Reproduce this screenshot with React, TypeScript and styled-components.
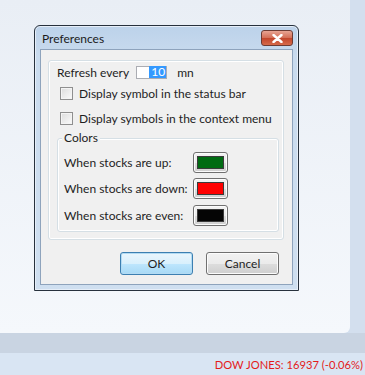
import styled, { createGlobalStyle } from "styled-components";

const GlobalStyle = createGlobalStyle`
  html, body {
    margin: 0;
    padding: 0;
  }
  body {
    font-family: Lato, "Noto Sans", sans-serif;
    font-size: 12px;
    color: #1e1e1e;
  }
`;

const Screen = styled.div`
  width: 365px;
  height: 375px;
  display: flex;
  flex-direction: column;
  overflow: hidden;
`;

const Workspace = styled.div`
  height: 333px;
  display: flex;
  background: #d3dfee;
`;

const Panel = styled.div`
  flex: 1;
  background: linear-gradient(#e9eef5, #f5f8fc);
  border-bottom-right-radius: 6px;
  padding: 25px 0 0 34px;
`;

const RightStrip = styled.div`
  width: 15px;
`;

const Band = styled.div`
  height: 20px;
  background: #c9d4e2;
`;

const StatusBar = styled.div`
  flex: 1;
  background: #d9e5f3;
  display: flex;
  align-items: center;
  justify-content: flex-end;
  padding-right: 2px;
  color: #e31b1b;
  font-size: 11.2px;
`;

const Dialog = styled.div`
  width: 265px;
  height: 266px;
  border: 1px solid #27313d;
  border-radius: 6px 6px 0 0;
  background: linear-gradient(#bcd2ea, #c9dbee 30px, #cfdff0);
  display: flex;
  flex-direction: column;
  padding: 0 5px 5px 5px;
  box-sizing: border-box;
  box-shadow: inset 0 0 0 1px #e6eef8;
`;

const TitleBar = styled.div`
  height: 23px;
  display: flex;
  align-items: center;
  justify-content: space-between;
  padding: 1px 0 0 2px;
  box-sizing: border-box;
  color: #1b1b1b;
`;

const CloseButton = styled.div`
  width: 30px;
  height: 14px;
  border: 1px solid #6d3b33;
  border-radius: 3px;
  background: linear-gradient(#e8a493, #d36d55 50%, #c2452b 51%, #d66a4a);
  display: flex;
  align-items: center;
  justify-content: center;
`;

const Client = styled.div`
  flex: 1;
  background: #f0f0f0;
  border: 1px solid #8ea3bc;
  padding: 10px 8px 0 7px;
  display: flex;
  flex-direction: column;
`;

const GroupBox = styled.div<{ $title?: boolean }>`
  border: 1px solid #d5dfe5;
  border-radius: 3px;
  box-shadow: inset 0 0 0 1px #fff;
  position: relative;
  display: flex;
  flex-direction: column;
  padding: ${(p) => (p.$title ? "10px 0 2px 6px" : "1px 4px 7px 8px")};
  margin-top: ${(p) => (p.$title ? "10px" : "0")};
`;

const GroupTitle = styled.span`
  position: absolute;
  top: -9px;
  left: 4px;
  padding: 0 2px;
  background: #f0f0f0;
`;

const Row = styled.div<{ $gap?: number }>`
  display: flex;
  align-items: center;
  height: 20px;
  margin-top: ${(p) => p.$gap ?? 0}px;
`;

const Label = styled.span`
  white-space: nowrap;
`;

const NumberInput = styled.div`
  width: 29px;
  height: 11px;
  border: 1px solid #abadb3;
  background: #fff;
  margin: 0 10px 0 7px;
  display: flex;
  justify-content: flex-end;
  align-items: center;
  line-height: 12px;
`;

const Selected = styled.span`
  background: #3399ff;
  color: #fff;
  padding: 0 1px 0 2px;
`;

const Checkbox = styled.span`
  width: 11px;
  height: 11px;
  border: 1px solid #8f8f8f;
  background: linear-gradient(135deg, #dcdcdc, #fbfbfb);
  box-shadow: inset 0 0 0 1px #f4f4f4;
  margin: 0 6px 0 3px;
  flex-shrink: 0;
`;

const ColorRow = styled.div`
  display: grid;
  grid-template-columns: 129px 35px;
  align-items: center;
  height: 26.5px;
`;

const PushButton = styled.div<{ $default?: boolean }>`
  border: 1px solid ${(p) => (p.$default ? "#3c7fb1" : "#707070")};
  border-radius: 3px;
  background: ${(p) =>
    p.$default
      ? "linear-gradient(#eaf6fd, #d9f0fc 50%, #bee6fd 51%, #a7d9f5)"
      : "linear-gradient(#f2f2f2, #ebebeb 50%, #dddddd 51%, #cfcfcf)"};
  box-shadow: inset 0 0 0 1px ${(p) => (p.$default ? "#b3dbf3" : "#fcfcfc")};
  display: flex;
  align-items: center;
  justify-content: center;
  box-sizing: border-box;
`;

const ColorButton = styled(PushButton)`
  width: 35px;
  height: 21px;
`;

const Swatch = styled.span<{ $color: string }>`
  width: 25px;
  height: 11px;
  background: ${(p) => p.$color};
  border: 1px solid #3a3a3a;
`;

const ButtonRow = styled.div`
  display: flex;
  justify-content: flex-end;
  gap: 13px;
  padding: 12px 5px 0 0;
`;

const DialogButton = styled(PushButton)`
  width: 73px;
  height: 23px;
`;

const colors = [
  { label: "When stocks are up:", color: "#006b12" },
  { label: "When stocks are down:", color: "#ff0000" },
  { label: "When stocks are even:", color: "#050505" },
];

export default function App() {
  return (
    <Screen>
      <GlobalStyle />
      <Workspace>
        <Panel>
          <Dialog>
            <TitleBar>
              <span>Preferences</span>
              <CloseButton>
                <svg width="11" height="9" viewBox="0 0 11 9">
                  <path
                    d="M1.5 1 L9.5 8 M9.5 1 L1.5 8"
                    stroke="#fff"
                    strokeWidth="2.4"
                    strokeLinecap="round"
                  />
                </svg>
              </CloseButton>
            </TitleBar>
            <Client>
              <GroupBox>
                <Row>
                  <Label>Refresh every</Label>
                  <NumberInput>
                    <Selected>10</Selected>
                  </NumberInput>
                  <Label>mn</Label>
                </Row>
                <Row $gap={1}>
                  <Checkbox />
                  <Label>Display symbol in the status bar</Label>
                </Row>
                <Row $gap={5}>
                  <Checkbox />
                  <Label>Display symbols in the context menu</Label>
                </Row>
                <GroupBox $title>
                  <GroupTitle>Colors</GroupTitle>
                  {colors.map((c) => (
                    <ColorRow key={c.label}>
                      <Label>{c.label}</Label>
                      <ColorButton>
                        <Swatch $color={c.color} />
                      </ColorButton>
                    </ColorRow>
                  ))}
                </GroupBox>
              </GroupBox>
              <ButtonRow>
                <DialogButton $default>OK</DialogButton>
                <DialogButton>Cancel</DialogButton>
              </ButtonRow>
            </Client>
          </Dialog>
        </Panel>
        <RightStrip />
      </Workspace>
      <Band />
      <StatusBar>DOW JONES: 16937 (-0.06%)</StatusBar>
    </Screen>
  );
}
